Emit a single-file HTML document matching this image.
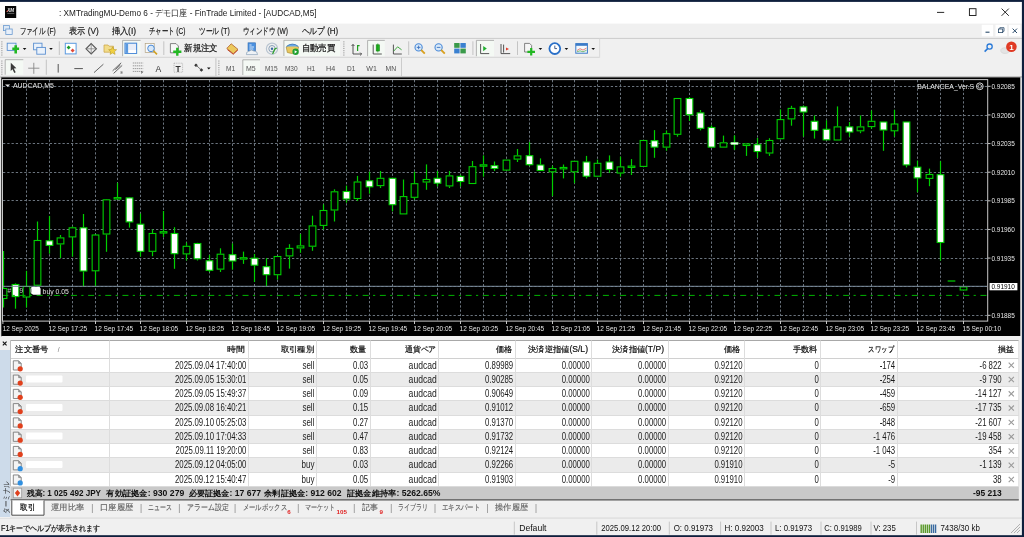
<!DOCTYPE html>
<html><head><meta charset="utf-8">
<style>
*{margin:0;padding:0}
html,body{width:1024px;height:537px;overflow:hidden;background:#f0f0f0;font-family:"Liberation Sans",sans-serif}
svg{position:absolute;left:0;top:0;will-change:transform}
</style></head><body>
<svg width="1024" height="537" viewBox="0 0 1024 537" font-family="Liberation Sans">
<rect x="0" y="0" width="1024" height="537" fill="#f0f0f0"/>
<rect x="0" y="0" width="1024" height="23.6" fill="#ffffff"/>
<rect x="0" y="76.4" width="1022" height="1.1" fill="#a8a8a8"/>
<rect x="0.9" y="77.3" width="1.1" height="259" fill="#707070"/>
<rect x="1.6" y="77.4" width="1018.7" height="258.6" fill="#000"/>
<defs><clipPath id="pc"><rect x="3" y="80" width="984" height="241"/></clipPath></defs>
<g clip-path="url(#pc)"><g stroke="#6a737d" stroke-width="1" stroke-dasharray="2.3 1.95" fill="none"><line x1="26.50" y1="80" x2="26.50" y2="321" /><line x1="49.50" y1="80" x2="49.50" y2="321" /><line x1="72.50" y1="80" x2="72.50" y2="321" /><line x1="95.50" y1="80" x2="95.50" y2="321" /><line x1="117.50" y1="80" x2="117.50" y2="321" /><line x1="140.50" y1="80" x2="140.50" y2="321" /><line x1="163.50" y1="80" x2="163.50" y2="321" /><line x1="186.50" y1="80" x2="186.50" y2="321" /><line x1="209.50" y1="80" x2="209.50" y2="321" /><line x1="232.50" y1="80" x2="232.50" y2="321" /><line x1="254.50" y1="80" x2="254.50" y2="321" /><line x1="277.50" y1="80" x2="277.50" y2="321" /><line x1="300.50" y1="80" x2="300.50" y2="321" /><line x1="323.50" y1="80" x2="323.50" y2="321" /><line x1="346.50" y1="80" x2="346.50" y2="321" /><line x1="369.50" y1="80" x2="369.50" y2="321" /><line x1="392.50" y1="80" x2="392.50" y2="321" /><line x1="414.50" y1="80" x2="414.50" y2="321" /><line x1="437.50" y1="80" x2="437.50" y2="321" /><line x1="460.50" y1="80" x2="460.50" y2="321" /><line x1="483.50" y1="80" x2="483.50" y2="321" /><line x1="506.50" y1="80" x2="506.50" y2="321" /><line x1="529.50" y1="80" x2="529.50" y2="321" /><line x1="552.50" y1="80" x2="552.50" y2="321" /><line x1="574.50" y1="80" x2="574.50" y2="321" /><line x1="597.50" y1="80" x2="597.50" y2="321" /><line x1="620.50" y1="80" x2="620.50" y2="321" /><line x1="643.50" y1="80" x2="643.50" y2="321" /><line x1="666.50" y1="80" x2="666.50" y2="321" /><line x1="689.50" y1="80" x2="689.50" y2="321" /><line x1="711.50" y1="80" x2="711.50" y2="321" /><line x1="734.50" y1="80" x2="734.50" y2="321" /><line x1="757.50" y1="80" x2="757.50" y2="321" /><line x1="780.50" y1="80" x2="780.50" y2="321" /><line x1="803.50" y1="80" x2="803.50" y2="321" /><line x1="826.50" y1="80" x2="826.50" y2="321" /><line x1="849.50" y1="80" x2="849.50" y2="321" /><line x1="871.50" y1="80" x2="871.50" y2="321" /><line x1="894.50" y1="80" x2="894.50" y2="321" /><line x1="917.50" y1="80" x2="917.50" y2="321" /><line x1="940.50" y1="80" x2="940.50" y2="321" /><line x1="963.50" y1="80" x2="963.50" y2="321" /><line x1="3" y1="86.50" x2="987" y2="86.50" /><line x1="3" y1="115.50" x2="987" y2="115.50" /><line x1="3" y1="143.50" x2="987" y2="143.50" /><line x1="3" y1="172.50" x2="987" y2="172.50" /><line x1="3" y1="200.50" x2="987" y2="200.50" /><line x1="3" y1="229.50" x2="987" y2="229.50" /><line x1="3" y1="258.50" x2="987" y2="258.50" /><line x1="3" y1="286.50" x2="987" y2="286.50" /><line x1="3" y1="315.50" x2="987" y2="315.50" /></g><g stroke="#00d000" stroke-width="1.2" fill="none"><line x1="3.50" y1="251.0" x2="3.50" y2="288.0" /><line x1="3.50" y1="299.0" x2="3.50" y2="307.4" /><line x1="15.50" y1="283.4" x2="15.50" y2="284.0" /><line x1="15.50" y1="297.1" x2="15.50" y2="308.7" /><line x1="26.50" y1="270.8" x2="26.50" y2="286.0" /><line x1="26.50" y1="297.5" x2="26.50" y2="307.4" /><line x1="37.50" y1="221.5" x2="37.50" y2="240.0" /><line x1="37.50" y1="285.7" x2="37.50" y2="290.0" /><line x1="49.50" y1="215.9" x2="49.50" y2="240.3" /><line x1="49.50" y1="245.9" x2="49.50" y2="253.7" /><line x1="60.50" y1="235.0" x2="60.50" y2="237.4" /><line x1="60.50" y1="244.4" x2="60.50" y2="258.0" /><line x1="72.50" y1="226.4" x2="72.50" y2="227.3" /><line x1="72.50" y1="237.4" x2="72.50" y2="256.6" /><line x1="83.50" y1="214.0" x2="83.50" y2="227.3" /><line x1="83.50" y1="271.5" x2="83.50" y2="286.7" /><line x1="95.50" y1="234.0" x2="95.50" y2="234.5" /><line x1="95.50" y1="271.3" x2="95.50" y2="286.7" /><line x1="106.50" y1="199.0" x2="106.50" y2="199.3" /><line x1="106.50" y1="234.5" x2="106.50" y2="251.8" /><line x1="117.50" y1="182.8" x2="117.50" y2="197.6" /><line x1="129.50" y1="197.0" x2="129.50" y2="197.4" /><line x1="129.50" y1="222.4" x2="129.50" y2="227.6" /><line x1="140.50" y1="213.6" x2="140.50" y2="223.7" /><line x1="140.50" y1="251.8" x2="140.50" y2="256.6" /><line x1="152.50" y1="229.4" x2="152.50" y2="233.0" /><line x1="152.50" y1="251.8" x2="152.50" y2="256.2" /><line x1="163.50" y1="211.0" x2="163.50" y2="231.3" /><line x1="163.50" y1="233.4" x2="163.50" y2="237.0" /><line x1="174.50" y1="227.2" x2="174.50" y2="233.0" /><line x1="174.50" y1="254.2" x2="174.50" y2="268.8" /><line x1="186.50" y1="242.5" x2="186.50" y2="245.8" /><line x1="186.50" y1="254.4" x2="186.50" y2="260.5" /><line x1="197.50" y1="242.8" x2="197.50" y2="243.0" /><line x1="197.50" y1="259.3" x2="197.50" y2="260.5" /><line x1="209.50" y1="255.0" x2="209.50" y2="260.3" /><line x1="209.50" y1="270.8" x2="209.50" y2="272.0" /><line x1="220.50" y1="248.3" x2="220.50" y2="253.7" /><line x1="220.50" y1="269.6" x2="220.50" y2="272.0" /><line x1="232.50" y1="243.5" x2="232.50" y2="254.2" /><line x1="232.50" y1="261.5" x2="232.50" y2="269.6" /><line x1="243.50" y1="251.6" x2="243.50" y2="257.3" /><line x1="243.50" y1="259.5" x2="243.50" y2="263.9" /><line x1="254.50" y1="254.0" x2="254.50" y2="257.7" /><line x1="254.50" y1="265.7" x2="254.50" y2="282.0" /><line x1="266.50" y1="258.1" x2="266.50" y2="266.2" /><line x1="266.50" y1="275.2" x2="266.50" y2="286.5" /><line x1="277.50" y1="275.2" x2="277.50" y2="279.6" /><line x1="289.50" y1="244.2" x2="289.50" y2="247.9" /><line x1="289.50" y1="256.4" x2="289.50" y2="268.6" /><line x1="300.50" y1="234.0" x2="300.50" y2="245.4" /><line x1="300.50" y1="248.4" x2="300.50" y2="252.8" /><line x1="312.50" y1="215.7" x2="312.50" y2="225.4" /><line x1="312.50" y1="246.7" x2="312.50" y2="250.8" /><line x1="323.50" y1="204.4" x2="323.50" y2="210.0" /><line x1="323.50" y1="225.9" x2="323.50" y2="229.6" /><line x1="334.50" y1="189.3" x2="334.50" y2="191.3" /><line x1="334.50" y1="210.5" x2="334.50" y2="221.5" /><line x1="346.50" y1="185.6" x2="346.50" y2="191.0" /><line x1="346.50" y1="199.5" x2="346.50" y2="202.7" /><line x1="357.50" y1="175.9" x2="357.50" y2="181.5" /><line x1="357.50" y1="199.0" x2="357.50" y2="201.0" /><line x1="369.50" y1="171.7" x2="369.50" y2="180.3" /><line x1="369.50" y1="187.3" x2="369.50" y2="193.7" /><line x1="380.50" y1="171.0" x2="380.50" y2="177.8" /><line x1="380.50" y1="186.1" x2="380.50" y2="188.0" /><line x1="392.50" y1="205.2" x2="392.50" y2="211.3" /><line x1="403.50" y1="179.5" x2="403.50" y2="196.1" /><line x1="414.50" y1="171.7" x2="414.50" y2="183.2" /><line x1="414.50" y1="197.8" x2="414.50" y2="199.5" /><line x1="426.50" y1="164.4" x2="426.50" y2="179.0" /><line x1="426.50" y1="182.5" x2="426.50" y2="189.8" /><line x1="437.50" y1="171.0" x2="437.50" y2="177.8" /><line x1="437.50" y1="183.7" x2="437.50" y2="186.4" /><line x1="449.50" y1="171.0" x2="449.50" y2="175.4" /><line x1="449.50" y1="186.4" x2="449.50" y2="188.0" /><line x1="460.50" y1="174.6" x2="460.50" y2="175.9" /><line x1="460.50" y1="182.0" x2="460.50" y2="186.4" /><line x1="472.50" y1="161.0" x2="472.50" y2="166.2" /><line x1="483.50" y1="155.4" x2="483.50" y2="164.5" /><line x1="483.50" y1="166.5" x2="483.50" y2="176.7" /><line x1="494.50" y1="161.5" x2="494.50" y2="165.2" /><line x1="494.50" y1="168.9" x2="494.50" y2="171.0" /><line x1="517.50" y1="149.0" x2="517.50" y2="155.4" /><line x1="517.50" y1="159.6" x2="517.50" y2="162.0" /><line x1="529.50" y1="142.0" x2="529.50" y2="155.2" /><line x1="529.50" y1="165.2" x2="529.50" y2="166.2" /><line x1="540.50" y1="158.4" x2="540.50" y2="164.5" /><line x1="552.50" y1="165.7" x2="552.50" y2="168.1" /><line x1="552.50" y1="172.3" x2="552.50" y2="196.2" /><line x1="563.50" y1="164.5" x2="563.50" y2="167.4" /><line x1="563.50" y1="168.9" x2="563.50" y2="178.4" /><line x1="574.50" y1="172.3" x2="574.50" y2="183.3" /><line x1="586.50" y1="155.9" x2="586.50" y2="161.5" /><line x1="586.50" y1="176.7" x2="586.50" y2="178.4" /><line x1="597.50" y1="159.6" x2="597.50" y2="162.8" /><line x1="609.50" y1="155.4" x2="609.50" y2="161.5" /><line x1="609.50" y1="170.0" x2="609.50" y2="173.0" /><line x1="620.50" y1="156.6" x2="620.50" y2="166.4" /><line x1="620.50" y1="173.5" x2="620.50" y2="176.7" /><line x1="631.50" y1="159.1" x2="631.50" y2="166.4" /><line x1="631.50" y1="167.1" x2="631.50" y2="175.0" /><line x1="654.50" y1="130.1" x2="654.50" y2="140.2" /><line x1="654.50" y1="147.6" x2="654.50" y2="157.8" /><line x1="666.50" y1="130.4" x2="666.50" y2="133.2" /><line x1="666.50" y1="147.6" x2="666.50" y2="150.7" /><line x1="677.50" y1="134.8" x2="677.50" y2="136.7" /><line x1="689.50" y1="97.2" x2="689.50" y2="98.0" /><line x1="689.50" y1="115.2" x2="689.50" y2="121.0" /><line x1="700.50" y1="110.0" x2="700.50" y2="112.4" /><line x1="700.50" y1="128.8" x2="700.50" y2="130.4" /><line x1="711.50" y1="125.4" x2="711.50" y2="127.0" /><line x1="711.50" y1="147.6" x2="711.50" y2="148.0" /><line x1="723.50" y1="135.6" x2="723.50" y2="142.3" /><line x1="734.50" y1="135.6" x2="734.50" y2="142.3" /><line x1="734.50" y1="144.6" x2="734.50" y2="149.6" /><line x1="734.50" y1="135.6" x2="734.50" y2="142.3" /><line x1="734.50" y1="144.6" x2="734.50" y2="149.6" /><line x1="746.50" y1="146.0" x2="746.50" y2="155.9" /><line x1="757.50" y1="137.9" x2="757.50" y2="144.2" /><line x1="757.50" y1="152.0" x2="757.50" y2="157.8" /><line x1="769.50" y1="138.2" x2="769.50" y2="140.0" /><line x1="769.50" y1="153.5" x2="769.50" y2="155.9" /><line x1="780.50" y1="109.4" x2="780.50" y2="119.1" /><line x1="791.50" y1="105.8" x2="791.50" y2="107.9" /><line x1="791.50" y1="119.4" x2="791.50" y2="125.7" /><line x1="803.50" y1="105.6" x2="803.50" y2="106.4" /><line x1="803.50" y1="112.5" x2="803.50" y2="136.6" /><line x1="814.50" y1="115.4" x2="814.50" y2="120.8" /><line x1="814.50" y1="130.8" x2="814.50" y2="138.6" /><line x1="826.50" y1="120.3" x2="826.50" y2="128.8" /><line x1="837.50" y1="106.4" x2="837.50" y2="126.4" /><line x1="849.50" y1="122.0" x2="849.50" y2="126.4" /><line x1="849.50" y1="132.5" x2="849.50" y2="136.6" /><line x1="860.50" y1="115.4" x2="860.50" y2="126.4" /><line x1="860.50" y1="131.3" x2="860.50" y2="133.2" /><line x1="871.50" y1="110.5" x2="871.50" y2="120.8" /><line x1="871.50" y1="127.1" x2="871.50" y2="128.8" /><line x1="883.50" y1="130.5" x2="883.50" y2="150.8" /><line x1="894.50" y1="109.8" x2="894.50" y2="123.5" /><line x1="894.50" y1="131.3" x2="894.50" y2="136.6" /><line x1="906.50" y1="165.4" x2="906.50" y2="167.4" /><line x1="917.50" y1="160.6" x2="917.50" y2="166.7" /><line x1="917.50" y1="178.4" x2="917.50" y2="192.3" /><line x1="929.50" y1="168.6" x2="929.50" y2="174.0" /><line x1="929.50" y1="178.9" x2="929.50" y2="186.2" /><line x1="940.50" y1="161.2" x2="940.50" y2="174.2" /><line x1="940.50" y1="243.0" x2="940.50" y2="260.6" /><line x1="947.65" y1="281.0" x2="955.35" y2="281.0" /></g><g stroke="#00d000" stroke-width="1.1"><rect x="0.15" y="288.50" width="6.70" height="10.00" fill="#000000" /><rect x="12.15" y="284.50" width="6.70" height="12.10" fill="#ffffff" /><rect x="23.15" y="286.50" width="6.70" height="10.50" fill="#000000" /><rect x="34.15" y="240.50" width="6.70" height="44.70" fill="#000000" /><rect x="46.15" y="240.80" width="6.70" height="4.60" fill="#ffffff" /><rect x="57.15" y="237.90" width="6.70" height="6.00" fill="#000000" /><rect x="69.15" y="227.80" width="6.70" height="9.10" fill="#000000" /><rect x="80.15" y="227.80" width="6.70" height="43.20" fill="#ffffff" /><rect x="92.15" y="235.00" width="6.70" height="35.80" fill="#000000" /><rect x="103.15" y="199.80" width="6.70" height="34.20" fill="#000000" /><rect x="114.15" y="197.60" width="6.70" height="1.40" fill="#000000" /><rect x="126.15" y="197.90" width="6.70" height="24.00" fill="#ffffff" /><rect x="137.15" y="224.20" width="6.70" height="27.10" fill="#ffffff" /><rect x="149.15" y="233.50" width="6.70" height="17.80" fill="#000000" /><rect x="160.15" y="231.65" width="6.70" height="1.40" fill="#000000" /><rect x="171.15" y="233.50" width="6.70" height="20.20" fill="#ffffff" /><rect x="183.15" y="246.30" width="6.70" height="7.60" fill="#000000" /><rect x="194.15" y="243.50" width="6.70" height="15.30" fill="#ffffff" /><rect x="206.15" y="260.80" width="6.70" height="9.50" fill="#ffffff" /><rect x="217.15" y="254.20" width="6.70" height="14.90" fill="#000000" /><rect x="229.15" y="254.70" width="6.70" height="6.30" fill="#ffffff" /><rect x="240.15" y="257.70" width="6.70" height="1.40" fill="#000000" /><rect x="251.15" y="258.20" width="6.70" height="7.00" fill="#ffffff" /><rect x="263.15" y="266.70" width="6.70" height="8.00" fill="#ffffff" /><rect x="274.15" y="256.50" width="6.70" height="18.20" fill="#000000" /><rect x="286.15" y="248.40" width="6.70" height="7.50" fill="#000000" /><rect x="297.15" y="245.90" width="6.70" height="2.00" fill="#000000" /><rect x="309.15" y="225.90" width="6.70" height="20.30" fill="#000000" /><rect x="320.15" y="210.50" width="6.70" height="14.90" fill="#000000" /><rect x="331.15" y="191.80" width="6.70" height="18.20" fill="#000000" /><rect x="343.15" y="191.50" width="6.70" height="7.50" fill="#ffffff" /><rect x="354.15" y="182.00" width="6.70" height="16.50" fill="#000000" /><rect x="366.15" y="180.80" width="6.70" height="6.00" fill="#ffffff" /><rect x="377.15" y="178.30" width="6.70" height="7.30" fill="#000000" /><rect x="389.15" y="178.30" width="6.70" height="26.40" fill="#ffffff" /><rect x="400.15" y="196.60" width="6.70" height="17.30" fill="#000000" /><rect x="411.15" y="183.70" width="6.70" height="13.60" fill="#000000" /><rect x="423.15" y="179.50" width="6.70" height="2.50" fill="#000000" /><rect x="434.15" y="178.30" width="6.70" height="4.90" fill="#ffffff" /><rect x="446.15" y="175.90" width="6.70" height="10.00" fill="#000000" /><rect x="457.15" y="176.40" width="6.70" height="5.10" fill="#ffffff" /><rect x="469.15" y="166.70" width="6.70" height="16.80" fill="#000000" /><rect x="480.15" y="164.80" width="6.70" height="1.40" fill="#000000" /><rect x="491.15" y="165.70" width="6.70" height="2.70" fill="#ffffff" /><rect x="503.15" y="160.10" width="6.70" height="10.00" fill="#000000" /><rect x="514.15" y="155.90" width="6.70" height="3.20" fill="#000000" /><rect x="526.15" y="155.70" width="6.70" height="9.00" fill="#ffffff" /><rect x="537.15" y="165.00" width="6.70" height="5.50" fill="#ffffff" /><rect x="549.15" y="168.60" width="6.70" height="3.20" fill="#000000" /><rect x="560.15" y="167.45" width="6.70" height="1.40" fill="#000000" /><rect x="571.15" y="161.30" width="6.70" height="10.50" fill="#000000" /><rect x="583.15" y="162.00" width="6.70" height="14.20" fill="#ffffff" /><rect x="594.15" y="163.30" width="6.70" height="12.90" fill="#000000" /><rect x="606.15" y="162.00" width="6.70" height="7.50" fill="#ffffff" /><rect x="617.15" y="166.90" width="6.70" height="6.10" fill="#000000" /><rect x="628.15" y="166.05" width="6.70" height="1.40" fill="#000000" /><rect x="640.15" y="140.50" width="6.70" height="25.90" fill="#000000" /><rect x="651.15" y="140.70" width="6.70" height="6.40" fill="#ffffff" /><rect x="663.15" y="133.70" width="6.70" height="13.40" fill="#000000" /><rect x="674.15" y="98.50" width="6.70" height="35.80" fill="#000000" /><rect x="686.15" y="98.50" width="6.70" height="16.20" fill="#ffffff" /><rect x="697.15" y="112.90" width="6.70" height="15.40" fill="#ffffff" /><rect x="708.15" y="127.50" width="6.70" height="19.60" fill="#ffffff" /><rect x="720.15" y="142.80" width="6.70" height="4.30" fill="#000000" /><rect x="730.95" y="142.30" width="7.10" height="2.30" fill="#ffffff" stroke="#60ff60" stroke-width="0.5"/><rect x="743.15" y="143.90" width="6.70" height="1.60" fill="#000000" /><rect x="754.15" y="144.70" width="6.70" height="6.80" fill="#ffffff" /><rect x="766.15" y="140.50" width="6.70" height="12.50" fill="#000000" /><rect x="777.15" y="119.60" width="6.70" height="19.10" fill="#000000" /><rect x="788.15" y="108.40" width="6.70" height="10.50" fill="#000000" /><rect x="800.15" y="106.90" width="6.70" height="5.10" fill="#ffffff" /><rect x="811.15" y="121.30" width="6.70" height="9.00" fill="#ffffff" /><rect x="823.15" y="129.30" width="6.70" height="10.50" fill="#ffffff" /><rect x="834.15" y="126.90" width="6.70" height="13.10" fill="#000000" /><rect x="846.15" y="126.90" width="6.70" height="5.10" fill="#ffffff" /><rect x="857.15" y="126.90" width="6.70" height="3.90" fill="#000000" /><rect x="868.15" y="121.30" width="6.70" height="5.30" fill="#000000" /><rect x="880.15" y="122.00" width="6.70" height="8.00" fill="#ffffff" /><rect x="891.15" y="124.00" width="6.70" height="6.80" fill="#000000" /><rect x="903.15" y="122.00" width="6.70" height="42.90" fill="#ffffff" /><rect x="914.15" y="167.20" width="6.70" height="10.70" fill="#ffffff" /><rect x="926.15" y="174.50" width="6.70" height="3.90" fill="#000000" /><rect x="937.15" y="174.70" width="6.70" height="67.80" fill="#ffffff" /><rect x="960.15" y="286.90" width="6.70" height="3.10" fill="#000000" /></g><line x1="3" y1="286.3" x2="987" y2="286.3" stroke="#7a8a9a" stroke-width="1"/><line x1="3" y1="295.4" x2="987" y2="295.4" stroke="#00b400" stroke-width="1" stroke-dasharray="6 4.35 2.2 4.61" stroke-dashoffset="0.68"/></g>
<rect x="2.5" y="79.6" width="985.2" height="241.5" fill="none" stroke="#c8c8c8" stroke-width="1"/>
<g fill="#e6e6e6" font-family="Liberation Sans" font-size="7.3"><text x="2.8" y="331.1" textLength="35.9" lengthAdjust="spacingAndGlyphs">12 Sep 2025</text><text x="48.60" y="331.1" textLength="38.6" lengthAdjust="spacingAndGlyphs">12 Sep 17:25</text><text x="94.60" y="331.1" textLength="38.6" lengthAdjust="spacingAndGlyphs">12 Sep 17:45</text><text x="139.60" y="331.1" textLength="38.6" lengthAdjust="spacingAndGlyphs">12 Sep 18:05</text><text x="185.60" y="331.1" textLength="38.6" lengthAdjust="spacingAndGlyphs">12 Sep 18:25</text><text x="231.60" y="331.1" textLength="38.6" lengthAdjust="spacingAndGlyphs">12 Sep 18:45</text><text x="276.60" y="331.1" textLength="38.6" lengthAdjust="spacingAndGlyphs">12 Sep 19:05</text><text x="322.60" y="331.1" textLength="38.6" lengthAdjust="spacingAndGlyphs">12 Sep 19:25</text><text x="368.60" y="331.1" textLength="38.6" lengthAdjust="spacingAndGlyphs">12 Sep 19:45</text><text x="413.60" y="331.1" textLength="38.6" lengthAdjust="spacingAndGlyphs">12 Sep 20:05</text><text x="459.60" y="331.1" textLength="38.6" lengthAdjust="spacingAndGlyphs">12 Sep 20:25</text><text x="505.60" y="331.1" textLength="38.6" lengthAdjust="spacingAndGlyphs">12 Sep 20:45</text><text x="551.60" y="331.1" textLength="38.6" lengthAdjust="spacingAndGlyphs">12 Sep 21:05</text><text x="596.60" y="331.1" textLength="38.6" lengthAdjust="spacingAndGlyphs">12 Sep 21:25</text><text x="642.60" y="331.1" textLength="38.6" lengthAdjust="spacingAndGlyphs">12 Sep 21:45</text><text x="688.60" y="331.1" textLength="38.6" lengthAdjust="spacingAndGlyphs">12 Sep 22:05</text><text x="733.60" y="331.1" textLength="38.6" lengthAdjust="spacingAndGlyphs">12 Sep 22:25</text><text x="779.60" y="331.1" textLength="38.6" lengthAdjust="spacingAndGlyphs">12 Sep 22:45</text><text x="825.60" y="331.1" textLength="38.6" lengthAdjust="spacingAndGlyphs">12 Sep 23:05</text><text x="870.60" y="331.1" textLength="38.6" lengthAdjust="spacingAndGlyphs">12 Sep 23:25</text><text x="916.60" y="331.1" textLength="38.6" lengthAdjust="spacingAndGlyphs">12 Sep 23:45</text><text x="962.60" y="331.1" textLength="38.4" lengthAdjust="spacingAndGlyphs">15 Sep 00:10</text><text x="991.4" y="88.90" textLength="23.4" lengthAdjust="spacingAndGlyphs">0.92085</text><text x="991.4" y="117.53" textLength="23.4" lengthAdjust="spacingAndGlyphs">0.92060</text><text x="991.4" y="146.16" textLength="23.4" lengthAdjust="spacingAndGlyphs">0.92035</text><text x="991.4" y="174.79" textLength="23.4" lengthAdjust="spacingAndGlyphs">0.92010</text><text x="991.4" y="203.42" textLength="23.4" lengthAdjust="spacingAndGlyphs">0.91985</text><text x="991.4" y="232.05" textLength="23.4" lengthAdjust="spacingAndGlyphs">0.91960</text><text x="991.4" y="260.68" textLength="23.4" lengthAdjust="spacingAndGlyphs">0.91935</text><text x="991.4" y="317.94" textLength="23.4" lengthAdjust="spacingAndGlyphs">0.91885</text></g><g stroke="#c8c8c8" stroke-width="1"><line x1="2.9" y1="321" x2="2.9" y2="324"/><line x1="49.50" y1="321" x2="49.50" y2="324"/><line x1="95.50" y1="321" x2="95.50" y2="324"/><line x1="140.50" y1="321" x2="140.50" y2="324"/><line x1="186.50" y1="321" x2="186.50" y2="324"/><line x1="232.50" y1="321" x2="232.50" y2="324"/><line x1="277.50" y1="321" x2="277.50" y2="324"/><line x1="323.50" y1="321" x2="323.50" y2="324"/><line x1="369.50" y1="321" x2="369.50" y2="324"/><line x1="414.50" y1="321" x2="414.50" y2="324"/><line x1="460.50" y1="321" x2="460.50" y2="324"/><line x1="506.50" y1="321" x2="506.50" y2="324"/><line x1="552.50" y1="321" x2="552.50" y2="324"/><line x1="597.50" y1="321" x2="597.50" y2="324"/><line x1="643.50" y1="321" x2="643.50" y2="324"/><line x1="689.50" y1="321" x2="689.50" y2="324"/><line x1="734.50" y1="321" x2="734.50" y2="324"/><line x1="780.50" y1="321" x2="780.50" y2="324"/><line x1="826.50" y1="321" x2="826.50" y2="324"/><line x1="871.50" y1="321" x2="871.50" y2="324"/><line x1="917.50" y1="321" x2="917.50" y2="324"/><line x1="963.50" y1="321" x2="963.50" y2="324"/><line x1="988" y1="86.30" x2="990.5" y2="86.30"/><line x1="988" y1="114.93" x2="990.5" y2="114.93"/><line x1="988" y1="143.56" x2="990.5" y2="143.56"/><line x1="988" y1="172.19" x2="990.5" y2="172.19"/><line x1="988" y1="200.82" x2="990.5" y2="200.82"/><line x1="988" y1="229.45" x2="990.5" y2="229.45"/><line x1="988" y1="258.08" x2="990.5" y2="258.08"/><line x1="988" y1="315.34" x2="990.5" y2="315.34"/></g>
<polygon points="5,84.4 10.2,84.4 7.6,86.8" fill="#f0f0f0"/>
<text x="12.9" y="88" fill="#e6e6e6" font-size="7.3" textLength="41" lengthAdjust="spacingAndGlyphs">AUDCAD,M5</text>
<text x="917.3" y="88.6" fill="#e6e6e6" font-size="7.3" textLength="56.8" lengthAdjust="spacingAndGlyphs">BALANCEA_Ver.S</text>
<circle cx="979.8" cy="86.3" r="3.4" fill="none" stroke="#e6e6e6" stroke-width="0.9"/>
<circle cx="979.8" cy="86.3" r="1.8" fill="none" stroke="#e6e6e6" stroke-width="0.7"/>
<rect x="989.6" y="283" width="27.8" height="7.3" fill="#fff"/>
<text x="991.4" y="289.2" fill="#000" font-size="7.3" textLength="23.4" lengthAdjust="spacingAndGlyphs">0.91910</text>
<text x="42.6" y="293.6" fill="#e0e0e0" font-size="7.3" textLength="26.2" lengthAdjust="spacingAndGlyphs">buy 0.05</text>
<text x="7.4" y="293.4" fill="#bdbdbd" font-size="6.6">#</text>
<text x="19.4" y="293.4" fill="#bdbdbd" font-size="6.6">9</text>
<text x="29.8" y="293.4" fill="#bdbdbd" font-size="6.6">0</text>
<path d="M31.3,287 h8.4 l0.9,1.8 v6 h-7.2 l-2.1,-1 z" fill="#fff"/>
<rect x="0" y="517.6" width="1022" height="0.9" fill="#d4d4d4"/>
<rect x="10.4" y="340.5" width="1008.4" height="17.5" fill="#fff"/><rect x="10.4" y="358.00" width="1008.40" height="14.27" fill="#ffffff"/><rect x="10.4" y="372.27" width="1008.40" height="14.27" fill="#ebebeb"/><rect x="10.4" y="386.54" width="1008.40" height="14.27" fill="#ffffff"/><rect x="10.4" y="400.81" width="1008.40" height="14.27" fill="#ebebeb"/><rect x="10.4" y="415.08" width="1008.40" height="14.27" fill="#ffffff"/><rect x="10.4" y="429.35" width="1008.40" height="14.27" fill="#ebebeb"/><rect x="10.4" y="443.62" width="1008.40" height="14.27" fill="#ffffff"/><rect x="10.4" y="457.89" width="1008.40" height="14.27" fill="#ebebeb"/><rect x="10.4" y="472.16" width="1008.40" height="14.27" fill="#ffffff"/><g stroke-width="1"><line x1="10.4" y1="340.5" x2="1018.8" y2="340.5" stroke="#a8a8a8"/><line x1="10.4" y1="358.5" x2="1018.8" y2="358.5" stroke="#d0d0d0"/><line x1="10.4" y1="372.50" x2="1018.8" y2="372.50" stroke="#dcdcdc"/><line x1="10.4" y1="386.50" x2="1018.8" y2="386.50" stroke="#dcdcdc"/><line x1="10.4" y1="400.50" x2="1018.8" y2="400.50" stroke="#dcdcdc"/><line x1="10.4" y1="415.50" x2="1018.8" y2="415.50" stroke="#dcdcdc"/><line x1="10.4" y1="429.50" x2="1018.8" y2="429.50" stroke="#dcdcdc"/><line x1="10.4" y1="443.50" x2="1018.8" y2="443.50" stroke="#dcdcdc"/><line x1="10.4" y1="457.50" x2="1018.8" y2="457.50" stroke="#dcdcdc"/><line x1="10.4" y1="472.50" x2="1018.8" y2="472.50" stroke="#dcdcdc"/><line x1="109.5" y1="340.5" x2="109.5" y2="486.4" stroke="#dddddd"/><line x1="248.5" y1="340.5" x2="248.5" y2="486.4" stroke="#dddddd"/><line x1="316.5" y1="340.5" x2="316.5" y2="486.4" stroke="#dddddd"/><line x1="370.5" y1="340.5" x2="370.5" y2="486.4" stroke="#dddddd"/><line x1="438.5" y1="340.5" x2="438.5" y2="486.4" stroke="#dddddd"/><line x1="515.5" y1="340.5" x2="515.5" y2="486.4" stroke="#dddddd"/><line x1="591.5" y1="340.5" x2="591.5" y2="486.4" stroke="#dddddd"/><line x1="668.5" y1="340.5" x2="668.5" y2="486.4" stroke="#dddddd"/><line x1="744.5" y1="340.5" x2="744.5" y2="486.4" stroke="#dddddd"/><line x1="820.5" y1="340.5" x2="820.5" y2="486.4" stroke="#dddddd"/><line x1="897.5" y1="340.5" x2="897.5" y2="486.4" stroke="#dddddd"/><line x1="10.4" y1="340.5" x2="10.4" y2="486.4" stroke="#a8a8a8"/><line x1="1018.8" y1="340.5" x2="1018.8" y2="486.4" stroke="#dcdcdc"/></g><text x="15.30" y="352.30" font-size="8.3" fill="#111" text-anchor="start" textLength="33.1" lengthAdjust="spacingAndGlyphs" stroke="#111" stroke-width="0.2">注文番号</text><text x="57.80" y="351.80" font-size="6.5" fill="#777" text-anchor="start">/</text><text x="227.20" y="352.30" font-size="8.3" fill="#111" text-anchor="start" textLength="17.8" lengthAdjust="spacingAndGlyphs" stroke="#111" stroke-width="0.2">時間</text><text x="280.50" y="352.30" font-size="8.3" fill="#111" text-anchor="start" textLength="33.9" lengthAdjust="spacingAndGlyphs" stroke="#111" stroke-width="0.2">取引種別</text><text x="350.20" y="352.30" font-size="8.3" fill="#111" text-anchor="start" textLength="16.1" lengthAdjust="spacingAndGlyphs" stroke="#111" stroke-width="0.2">数量</text><text x="404.90" y="352.30" font-size="8.3" fill="#111" text-anchor="start" textLength="31.4" lengthAdjust="spacingAndGlyphs" stroke="#111" stroke-width="0.2">通貨ペア</text><text x="495.70" y="352.30" font-size="8.3" fill="#111" text-anchor="start" textLength="16.3" lengthAdjust="spacingAndGlyphs" stroke="#111" stroke-width="0.2">価格</text><text x="528.20" y="352.30" font-size="8.3" fill="#111" text-anchor="start" textLength="59.8" lengthAdjust="spacingAndGlyphs" stroke="#111" stroke-width="0.2">決済逆指値(S/L)</text><text x="612.10" y="352.30" font-size="8.3" fill="#111" text-anchor="start" textLength="51.9" lengthAdjust="spacingAndGlyphs" stroke="#111" stroke-width="0.2">決済指値(T/P)</text><text x="724.20" y="352.30" font-size="8.3" fill="#111" text-anchor="start" textLength="16.4" lengthAdjust="spacingAndGlyphs" stroke="#111" stroke-width="0.2">価格</text><text x="792.70" y="352.30" font-size="8.3" fill="#111" text-anchor="start" textLength="24.6" lengthAdjust="spacingAndGlyphs" stroke="#111" stroke-width="0.2">手数料</text><text x="868.40" y="352.30" font-size="8.3" fill="#111" text-anchor="start" textLength="25.5" lengthAdjust="spacingAndGlyphs" stroke="#111" stroke-width="0.2">スワップ</text><text x="998.30" y="352.30" font-size="8.3" fill="#111" text-anchor="start" textLength="15.9" lengthAdjust="spacingAndGlyphs" stroke="#111" stroke-width="0.2">損益</text><text transform="translate(246.40,368.60) scale(0.7783,1)" font-size="10" fill="#1a1a1a" text-anchor="end">2025.09.04 17:40:00</text><text transform="translate(314.40,368.60) scale(0.7998,1)" font-size="10" fill="#1a1a1a" text-anchor="end">sell</text><text transform="translate(368.20,368.60) scale(0.7783,1)" font-size="10" fill="#1a1a1a" text-anchor="end">0.03</text><text transform="translate(436.80,368.60) scale(0.86,1)" font-size="10" fill="#1a1a1a" text-anchor="end">audcad</text><text transform="translate(513.20,368.60) scale(0.7783,1)" font-size="10" fill="#1a1a1a" text-anchor="end">0.89989</text><text transform="translate(589.80,368.60) scale(0.7783,1)" font-size="10" fill="#1a1a1a" text-anchor="end">0.00000</text><text transform="translate(666.20,368.60) scale(0.7783,1)" font-size="10" fill="#1a1a1a" text-anchor="end">0.00000</text><text transform="translate(742.50,368.60) scale(0.7783,1)" font-size="10" fill="#1a1a1a" text-anchor="end">0.92120</text><text transform="translate(818.80,368.60) scale(0.7783,1)" font-size="10" fill="#1a1a1a" text-anchor="end">0</text><text transform="translate(895.20,368.60) scale(0.7783,1)" font-size="10" fill="#1a1a1a" text-anchor="end">-174</text><text transform="translate(1001.60,368.60) scale(0.7783,1)" font-size="10" fill="#1a1a1a" text-anchor="end">-6 822</text><path d="M1008.6999999999999,362.7 L1013.9,367.90000000000003 M1013.9,362.7 L1008.6999999999999,367.90000000000003" stroke="#9a9a9a" stroke-width="1.1"/><path d="M13.3,360.79999999999995 h5.3 l2.6,2.6 v6.6 h-7.9 z" fill="#f4f4f4" stroke="#7a7a7a" stroke-width="0.9"/><path d="M18.6,360.79999999999995 v2.6 h2.6" fill="#9a9a9a" stroke="#7a7a7a" stroke-width="0.6"/><circle cx="20.200000000000003" cy="368.79999999999995" r="2.6" fill="#e0401c"/><text transform="translate(246.40,382.87) scale(0.7783,1)" font-size="10" fill="#1a1a1a" text-anchor="end">2025.09.05 15:30:01</text><text transform="translate(314.40,382.87) scale(0.7998,1)" font-size="10" fill="#1a1a1a" text-anchor="end">sell</text><text transform="translate(368.20,382.87) scale(0.7783,1)" font-size="10" fill="#1a1a1a" text-anchor="end">0.05</text><text transform="translate(436.80,382.87) scale(0.86,1)" font-size="10" fill="#1a1a1a" text-anchor="end">audcad</text><text transform="translate(513.20,382.87) scale(0.7783,1)" font-size="10" fill="#1a1a1a" text-anchor="end">0.90285</text><text transform="translate(589.80,382.87) scale(0.7783,1)" font-size="10" fill="#1a1a1a" text-anchor="end">0.00000</text><text transform="translate(666.20,382.87) scale(0.7783,1)" font-size="10" fill="#1a1a1a" text-anchor="end">0.00000</text><text transform="translate(742.50,382.87) scale(0.7783,1)" font-size="10" fill="#1a1a1a" text-anchor="end">0.92120</text><text transform="translate(818.80,382.87) scale(0.7783,1)" font-size="10" fill="#1a1a1a" text-anchor="end">0</text><text transform="translate(895.20,382.87) scale(0.7783,1)" font-size="10" fill="#1a1a1a" text-anchor="end">-254</text><text transform="translate(1001.60,382.87) scale(0.7783,1)" font-size="10" fill="#1a1a1a" text-anchor="end">-9 790</text><path d="M1008.6999999999999,376.96999999999997 L1013.9,382.17 M1013.9,376.96999999999997 L1008.6999999999999,382.17" stroke="#9a9a9a" stroke-width="1.1"/><path d="M13.3,375.06999999999994 h5.3 l2.6,2.6 v6.6 h-7.9 z" fill="#f4f4f4" stroke="#7a7a7a" stroke-width="0.9"/><path d="M18.6,375.06999999999994 v2.6 h2.6" fill="#9a9a9a" stroke="#7a7a7a" stroke-width="0.6"/><circle cx="20.200000000000003" cy="383.06999999999994" r="2.6" fill="#e0401c"/><rect x="26" y="375.47" width="36.5" height="7" fill="#ffffff" rx="1"/><text transform="translate(246.40,397.14) scale(0.7783,1)" font-size="10" fill="#1a1a1a" text-anchor="end">2025.09.05 15:49:37</text><text transform="translate(314.40,397.14) scale(0.7998,1)" font-size="10" fill="#1a1a1a" text-anchor="end">sell</text><text transform="translate(368.20,397.14) scale(0.7783,1)" font-size="10" fill="#1a1a1a" text-anchor="end">0.09</text><text transform="translate(436.80,397.14) scale(0.86,1)" font-size="10" fill="#1a1a1a" text-anchor="end">audcad</text><text transform="translate(513.20,397.14) scale(0.7783,1)" font-size="10" fill="#1a1a1a" text-anchor="end">0.90649</text><text transform="translate(589.80,397.14) scale(0.7783,1)" font-size="10" fill="#1a1a1a" text-anchor="end">0.00000</text><text transform="translate(666.20,397.14) scale(0.7783,1)" font-size="10" fill="#1a1a1a" text-anchor="end">0.00000</text><text transform="translate(742.50,397.14) scale(0.7783,1)" font-size="10" fill="#1a1a1a" text-anchor="end">0.92120</text><text transform="translate(818.80,397.14) scale(0.7783,1)" font-size="10" fill="#1a1a1a" text-anchor="end">0</text><text transform="translate(895.20,397.14) scale(0.7783,1)" font-size="10" fill="#1a1a1a" text-anchor="end">-459</text><text transform="translate(1001.60,397.14) scale(0.7783,1)" font-size="10" fill="#1a1a1a" text-anchor="end">-14 127</text><path d="M1008.6999999999999,391.24 L1013.9,396.44000000000005 M1013.9,391.24 L1008.6999999999999,396.44000000000005" stroke="#9a9a9a" stroke-width="1.1"/><path d="M13.3,389.34 h5.3 l2.6,2.6 v6.6 h-7.9 z" fill="#f4f4f4" stroke="#7a7a7a" stroke-width="0.9"/><path d="M18.6,389.34 v2.6 h2.6" fill="#9a9a9a" stroke="#7a7a7a" stroke-width="0.6"/><circle cx="20.200000000000003" cy="397.34" r="2.6" fill="#e0401c"/><text transform="translate(246.40,411.41) scale(0.7783,1)" font-size="10" fill="#1a1a1a" text-anchor="end">2025.09.08 16:40:21</text><text transform="translate(314.40,411.41) scale(0.7998,1)" font-size="10" fill="#1a1a1a" text-anchor="end">sell</text><text transform="translate(368.20,411.41) scale(0.7783,1)" font-size="10" fill="#1a1a1a" text-anchor="end">0.15</text><text transform="translate(436.80,411.41) scale(0.86,1)" font-size="10" fill="#1a1a1a" text-anchor="end">audcad</text><text transform="translate(513.20,411.41) scale(0.7783,1)" font-size="10" fill="#1a1a1a" text-anchor="end">0.91012</text><text transform="translate(589.80,411.41) scale(0.7783,1)" font-size="10" fill="#1a1a1a" text-anchor="end">0.00000</text><text transform="translate(666.20,411.41) scale(0.7783,1)" font-size="10" fill="#1a1a1a" text-anchor="end">0.00000</text><text transform="translate(742.50,411.41) scale(0.7783,1)" font-size="10" fill="#1a1a1a" text-anchor="end">0.92120</text><text transform="translate(818.80,411.41) scale(0.7783,1)" font-size="10" fill="#1a1a1a" text-anchor="end">0</text><text transform="translate(895.20,411.41) scale(0.7783,1)" font-size="10" fill="#1a1a1a" text-anchor="end">-659</text><text transform="translate(1001.60,411.41) scale(0.7783,1)" font-size="10" fill="#1a1a1a" text-anchor="end">-17 735</text><path d="M1008.6999999999999,405.51 L1013.9,410.71000000000004 M1013.9,405.51 L1008.6999999999999,410.71000000000004" stroke="#9a9a9a" stroke-width="1.1"/><path d="M13.3,403.60999999999996 h5.3 l2.6,2.6 v6.6 h-7.9 z" fill="#f4f4f4" stroke="#7a7a7a" stroke-width="0.9"/><path d="M18.6,403.60999999999996 v2.6 h2.6" fill="#9a9a9a" stroke="#7a7a7a" stroke-width="0.6"/><circle cx="20.200000000000003" cy="411.60999999999996" r="2.6" fill="#e0401c"/><rect x="26" y="404.01" width="36.5" height="7" fill="#ffffff" rx="1"/><text transform="translate(246.40,425.68) scale(0.7783,1)" font-size="10" fill="#1a1a1a" text-anchor="end">2025.09.10 05:25:03</text><text transform="translate(314.40,425.68) scale(0.7998,1)" font-size="10" fill="#1a1a1a" text-anchor="end">sell</text><text transform="translate(368.20,425.68) scale(0.7783,1)" font-size="10" fill="#1a1a1a" text-anchor="end">0.27</text><text transform="translate(436.80,425.68) scale(0.86,1)" font-size="10" fill="#1a1a1a" text-anchor="end">audcad</text><text transform="translate(513.20,425.68) scale(0.7783,1)" font-size="10" fill="#1a1a1a" text-anchor="end">0.91370</text><text transform="translate(589.80,425.68) scale(0.7783,1)" font-size="10" fill="#1a1a1a" text-anchor="end">0.00000</text><text transform="translate(666.20,425.68) scale(0.7783,1)" font-size="10" fill="#1a1a1a" text-anchor="end">0.00000</text><text transform="translate(742.50,425.68) scale(0.7783,1)" font-size="10" fill="#1a1a1a" text-anchor="end">0.92120</text><text transform="translate(818.80,425.68) scale(0.7783,1)" font-size="10" fill="#1a1a1a" text-anchor="end">0</text><text transform="translate(895.20,425.68) scale(0.7783,1)" font-size="10" fill="#1a1a1a" text-anchor="end">-848</text><text transform="translate(1001.60,425.68) scale(0.7783,1)" font-size="10" fill="#1a1a1a" text-anchor="end">-21 607</text><path d="M1008.6999999999999,419.78 L1013.9,424.98 M1013.9,419.78 L1008.6999999999999,424.98" stroke="#9a9a9a" stroke-width="1.1"/><path d="M13.3,417.87999999999994 h5.3 l2.6,2.6 v6.6 h-7.9 z" fill="#f4f4f4" stroke="#7a7a7a" stroke-width="0.9"/><path d="M18.6,417.87999999999994 v2.6 h2.6" fill="#9a9a9a" stroke="#7a7a7a" stroke-width="0.6"/><circle cx="20.200000000000003" cy="425.87999999999994" r="2.6" fill="#e0401c"/><text transform="translate(246.40,439.95) scale(0.7783,1)" font-size="10" fill="#1a1a1a" text-anchor="end">2025.09.10 17:04:33</text><text transform="translate(314.40,439.95) scale(0.7998,1)" font-size="10" fill="#1a1a1a" text-anchor="end">sell</text><text transform="translate(368.20,439.95) scale(0.7783,1)" font-size="10" fill="#1a1a1a" text-anchor="end">0.47</text><text transform="translate(436.80,439.95) scale(0.86,1)" font-size="10" fill="#1a1a1a" text-anchor="end">audcad</text><text transform="translate(513.20,439.95) scale(0.7783,1)" font-size="10" fill="#1a1a1a" text-anchor="end">0.91732</text><text transform="translate(589.80,439.95) scale(0.7783,1)" font-size="10" fill="#1a1a1a" text-anchor="end">0.00000</text><text transform="translate(666.20,439.95) scale(0.7783,1)" font-size="10" fill="#1a1a1a" text-anchor="end">0.00000</text><text transform="translate(742.50,439.95) scale(0.7783,1)" font-size="10" fill="#1a1a1a" text-anchor="end">0.92120</text><text transform="translate(818.80,439.95) scale(0.7783,1)" font-size="10" fill="#1a1a1a" text-anchor="end">0</text><text transform="translate(895.20,439.95) scale(0.7783,1)" font-size="10" fill="#1a1a1a" text-anchor="end">-1 476</text><text transform="translate(1001.60,439.95) scale(0.7783,1)" font-size="10" fill="#1a1a1a" text-anchor="end">-19 458</text><path d="M1008.6999999999999,434.05 L1013.9,439.25000000000006 M1013.9,434.05 L1008.6999999999999,439.25000000000006" stroke="#9a9a9a" stroke-width="1.1"/><path d="M13.3,432.15 h5.3 l2.6,2.6 v6.6 h-7.9 z" fill="#f4f4f4" stroke="#7a7a7a" stroke-width="0.9"/><path d="M18.6,432.15 v2.6 h2.6" fill="#9a9a9a" stroke="#7a7a7a" stroke-width="0.6"/><circle cx="20.200000000000003" cy="440.15" r="2.6" fill="#e0401c"/><rect x="26" y="432.55" width="36.5" height="7" fill="#ffffff" rx="1"/><text transform="translate(246.40,454.22) scale(0.7783,1)" font-size="10" fill="#1a1a1a" text-anchor="end">2025.09.11 19:20:00</text><text transform="translate(314.40,454.22) scale(0.7998,1)" font-size="10" fill="#1a1a1a" text-anchor="end">sell</text><text transform="translate(368.20,454.22) scale(0.7783,1)" font-size="10" fill="#1a1a1a" text-anchor="end">0.83</text><text transform="translate(436.80,454.22) scale(0.86,1)" font-size="10" fill="#1a1a1a" text-anchor="end">audcad</text><text transform="translate(513.20,454.22) scale(0.7783,1)" font-size="10" fill="#1a1a1a" text-anchor="end">0.92124</text><text transform="translate(589.80,454.22) scale(0.7783,1)" font-size="10" fill="#1a1a1a" text-anchor="end">0.00000</text><text transform="translate(666.20,454.22) scale(0.7783,1)" font-size="10" fill="#1a1a1a" text-anchor="end">0.00000</text><text transform="translate(742.50,454.22) scale(0.7783,1)" font-size="10" fill="#1a1a1a" text-anchor="end">0.92120</text><text transform="translate(818.80,454.22) scale(0.7783,1)" font-size="10" fill="#1a1a1a" text-anchor="end">0</text><text transform="translate(895.20,454.22) scale(0.7783,1)" font-size="10" fill="#1a1a1a" text-anchor="end">-1 043</text><text transform="translate(1001.60,454.22) scale(0.7783,1)" font-size="10" fill="#1a1a1a" text-anchor="end">354</text><path d="M1008.6999999999999,448.32 L1013.9,453.52000000000004 M1013.9,448.32 L1008.6999999999999,453.52000000000004" stroke="#9a9a9a" stroke-width="1.1"/><path d="M13.3,446.41999999999996 h5.3 l2.6,2.6 v6.6 h-7.9 z" fill="#f4f4f4" stroke="#7a7a7a" stroke-width="0.9"/><path d="M18.6,446.41999999999996 v2.6 h2.6" fill="#9a9a9a" stroke="#7a7a7a" stroke-width="0.6"/><circle cx="20.200000000000003" cy="454.41999999999996" r="2.6" fill="#e0401c"/><text transform="translate(246.40,468.49) scale(0.7783,1)" font-size="10" fill="#1a1a1a" text-anchor="end">2025.09.12 04:05:00</text><text transform="translate(314.40,468.49) scale(0.7998,1)" font-size="10" fill="#1a1a1a" text-anchor="end">buy</text><text transform="translate(368.20,468.49) scale(0.7783,1)" font-size="10" fill="#1a1a1a" text-anchor="end">0.03</text><text transform="translate(436.80,468.49) scale(0.86,1)" font-size="10" fill="#1a1a1a" text-anchor="end">audcad</text><text transform="translate(513.20,468.49) scale(0.7783,1)" font-size="10" fill="#1a1a1a" text-anchor="end">0.92266</text><text transform="translate(589.80,468.49) scale(0.7783,1)" font-size="10" fill="#1a1a1a" text-anchor="end">0.00000</text><text transform="translate(666.20,468.49) scale(0.7783,1)" font-size="10" fill="#1a1a1a" text-anchor="end">0.00000</text><text transform="translate(742.50,468.49) scale(0.7783,1)" font-size="10" fill="#1a1a1a" text-anchor="end">0.91910</text><text transform="translate(818.80,468.49) scale(0.7783,1)" font-size="10" fill="#1a1a1a" text-anchor="end">0</text><text transform="translate(895.20,468.49) scale(0.7783,1)" font-size="10" fill="#1a1a1a" text-anchor="end">-5</text><text transform="translate(1001.60,468.49) scale(0.7783,1)" font-size="10" fill="#1a1a1a" text-anchor="end">-1 139</text><path d="M1008.6999999999999,462.59 L1013.9,467.79 M1013.9,462.59 L1008.6999999999999,467.79" stroke="#9a9a9a" stroke-width="1.1"/><path d="M13.3,460.68999999999994 h5.3 l2.6,2.6 v6.6 h-7.9 z" fill="#f4f4f4" stroke="#7a7a7a" stroke-width="0.9"/><path d="M18.6,460.68999999999994 v2.6 h2.6" fill="#9a9a9a" stroke="#7a7a7a" stroke-width="0.6"/><circle cx="20.200000000000003" cy="468.68999999999994" r="2.6" fill="#2f8fe0"/><rect x="26" y="461.09" width="36.5" height="7" fill="#ffffff" rx="1"/><text transform="translate(246.40,482.76) scale(0.7783,1)" font-size="10" fill="#1a1a1a" text-anchor="end">2025.09.12 15:40:47</text><text transform="translate(314.40,482.76) scale(0.7998,1)" font-size="10" fill="#1a1a1a" text-anchor="end">buy</text><text transform="translate(368.20,482.76) scale(0.7783,1)" font-size="10" fill="#1a1a1a" text-anchor="end">0.05</text><text transform="translate(436.80,482.76) scale(0.86,1)" font-size="10" fill="#1a1a1a" text-anchor="end">audcad</text><text transform="translate(513.20,482.76) scale(0.7783,1)" font-size="10" fill="#1a1a1a" text-anchor="end">0.91903</text><text transform="translate(589.80,482.76) scale(0.7783,1)" font-size="10" fill="#1a1a1a" text-anchor="end">0.00000</text><text transform="translate(666.20,482.76) scale(0.7783,1)" font-size="10" fill="#1a1a1a" text-anchor="end">0.00000</text><text transform="translate(742.50,482.76) scale(0.7783,1)" font-size="10" fill="#1a1a1a" text-anchor="end">0.91910</text><text transform="translate(818.80,482.76) scale(0.7783,1)" font-size="10" fill="#1a1a1a" text-anchor="end">0</text><text transform="translate(895.20,482.76) scale(0.7783,1)" font-size="10" fill="#1a1a1a" text-anchor="end">-9</text><text transform="translate(1001.60,482.76) scale(0.7783,1)" font-size="10" fill="#1a1a1a" text-anchor="end">38</text><path d="M1008.6999999999999,476.85999999999996 L1013.9,482.06 M1013.9,476.85999999999996 L1008.6999999999999,482.06" stroke="#9a9a9a" stroke-width="1.1"/><path d="M13.3,474.9599999999999 h5.3 l2.6,2.6 v6.6 h-7.9 z" fill="#f4f4f4" stroke="#7a7a7a" stroke-width="0.9"/><path d="M18.6,474.9599999999999 v2.6 h2.6" fill="#9a9a9a" stroke="#7a7a7a" stroke-width="0.6"/><circle cx="20.200000000000003" cy="482.9599999999999" r="2.6" fill="#2f8fe0"/><rect x="10.4" y="486.4" width="1008.4" height="13.6" fill="#c9c9c9"/><line x1="10.4" y1="499.8" x2="1018.8" y2="499.8" stroke="#555" stroke-width="1.2"/><rect x="13.3" y="488.2" width="8.4" height="9.6" fill="#f4f4f4" stroke="#9a9a9a" stroke-width="0.8"/><path d="M17.5,489.8 l2.6,3.3 l-2.6,3.3 l-2.6,-3.3 z" fill="#e0401c"/><text x="26.90" y="496.00" font-size="8.4" fill="#111" text-anchor="start" textLength="74.1" lengthAdjust="spacingAndGlyphs" font-weight="bold">残高: 1 025 492 JPY</text><text x="106.30" y="496.00" font-size="8.4" fill="#111" text-anchor="start" textLength="78" lengthAdjust="spacingAndGlyphs" font-weight="bold">有効証拠金: 930 279</text><text x="188.60" y="496.00" font-size="8.4" fill="#111" text-anchor="start" textLength="72.4" lengthAdjust="spacingAndGlyphs" font-weight="bold">必要証拠金: 17 677</text><text x="264.10" y="496.00" font-size="8.4" fill="#111" text-anchor="start" textLength="77.4" lengthAdjust="spacingAndGlyphs" font-weight="bold">余剰証拠金: 912 602</text><text x="347.00" y="496.00" font-size="8.4" fill="#111" text-anchor="start" textLength="93.5" lengthAdjust="spacingAndGlyphs" font-weight="bold">証拠金維持率: 5262.65%</text><text x="1001.60" y="496.00" font-size="8.4" fill="#111" text-anchor="end" textLength="28.6" lengthAdjust="spacingAndGlyphs" font-weight="bold">-95 213</text><path d="M11.8,500.5 V515.2 H44 V500.5" fill="#fff" stroke="#3a3a3a" stroke-width="0.9"/><text x="20.40" y="510.00" font-size="8.3" fill="#111" text-anchor="start" textLength="15" lengthAdjust="spacingAndGlyphs" stroke="#111" stroke-width="0.25">取引</text><text x="51.10" y="510.00" font-size="8.3" fill="#5c5c5c" text-anchor="start" textLength="33.1" lengthAdjust="spacingAndGlyphs" stroke="#5c5c5c" stroke-width="0.12">運用比率</text><text x="99.90" y="510.00" font-size="8.3" fill="#5c5c5c" text-anchor="start" textLength="33.3" lengthAdjust="spacingAndGlyphs" stroke="#5c5c5c" stroke-width="0.12">口座履歴</text><text x="148.20" y="510.00" font-size="8.3" fill="#5c5c5c" text-anchor="start" textLength="23.7" lengthAdjust="spacingAndGlyphs" stroke="#5c5c5c" stroke-width="0.12">ニュース</text><text x="186.90" y="510.00" font-size="8.3" fill="#5c5c5c" text-anchor="start" textLength="41.6" lengthAdjust="spacingAndGlyphs" stroke="#5c5c5c" stroke-width="0.12">アラーム設定</text><text x="242.80" y="510.00" font-size="8.3" fill="#5c5c5c" text-anchor="start" textLength="44.2" lengthAdjust="spacingAndGlyphs" stroke="#5c5c5c" stroke-width="0.12">メールボックス</text><text x="305.00" y="510.00" font-size="8.3" fill="#5c5c5c" text-anchor="start" textLength="30.2" lengthAdjust="spacingAndGlyphs" stroke="#5c5c5c" stroke-width="0.12">マーケット</text><text x="361.70" y="510.00" font-size="8.3" fill="#5c5c5c" text-anchor="start" textLength="15.9" lengthAdjust="spacingAndGlyphs" stroke="#5c5c5c" stroke-width="0.12">記事</text><text x="398.00" y="510.00" font-size="8.3" fill="#5c5c5c" text-anchor="start" textLength="30.2" lengthAdjust="spacingAndGlyphs" stroke="#5c5c5c" stroke-width="0.12">ライブラリ</text><text x="441.80" y="510.00" font-size="8.3" fill="#5c5c5c" text-anchor="start" textLength="38.3" lengthAdjust="spacingAndGlyphs" stroke="#5c5c5c" stroke-width="0.12">エキスパート</text><text x="495.20" y="510.00" font-size="8.3" fill="#5c5c5c" text-anchor="start" textLength="32.8" lengthAdjust="spacingAndGlyphs" stroke="#5c5c5c" stroke-width="0.12">操作履歴</text><line x1="92.4" y1="504" x2="92.4" y2="513" stroke="#9a9a9a" stroke-width="0.9"/><line x1="141.1" y1="504" x2="141.1" y2="513" stroke="#9a9a9a" stroke-width="0.9"/><line x1="179.4" y1="504" x2="179.4" y2="513" stroke="#9a9a9a" stroke-width="0.9"/><line x1="235.1" y1="504" x2="235.1" y2="513" stroke="#9a9a9a" stroke-width="0.9"/><line x1="298.3" y1="504" x2="298.3" y2="513" stroke="#9a9a9a" stroke-width="0.9"/><line x1="354.3" y1="504" x2="354.3" y2="513" stroke="#9a9a9a" stroke-width="0.9"/><line x1="391.3" y1="504" x2="391.3" y2="513" stroke="#9a9a9a" stroke-width="0.9"/><line x1="435" y1="504" x2="435" y2="513" stroke="#9a9a9a" stroke-width="0.9"/><line x1="487.5" y1="504" x2="487.5" y2="513" stroke="#9a9a9a" stroke-width="0.9"/><line x1="536" y1="504" x2="536" y2="513" stroke="#9a9a9a" stroke-width="0.9"/><text x="287.30" y="513.60" font-size="6.2" fill="#e02020" text-anchor="start" font-weight="bold">6</text><text x="336.60" y="514.40" font-size="6.2" fill="#e02020" text-anchor="start" textLength="10.4" lengthAdjust="spacingAndGlyphs" font-weight="bold">105</text><text x="379.50" y="513.80" font-size="6.2" fill="#e02020" text-anchor="start" font-weight="bold">9</text><rect x="0" y="340" width="10.2" height="178" fill="#f0f0f0"/><rect x="0" y="350" width="10.2" height="167" fill="#cddbea"/><path d="M2.8,341.6 l3.8,3.8 M6.6,341.6 l-3.8,3.8" stroke="#111" stroke-width="1.1"/><text transform="translate(8.6,514) rotate(-90)" font-size="8" fill="#333" textLength="33" lengthAdjust="spacingAndGlyphs">ターミナル</text><text x="1.00" y="530.60" font-size="8.3" fill="#111" text-anchor="start" textLength="99.3" lengthAdjust="spacingAndGlyphs" stroke="#111" stroke-width="0.2">F1キーでヘルプが表示されます</text><line x1="514.3" y1="521.6" x2="514.3" y2="534.6" stroke="#c6c6c6" stroke-width="1"/><line x1="596.8" y1="521.6" x2="596.8" y2="534.6" stroke="#c6c6c6" stroke-width="1"/><line x1="669.3" y1="521.6" x2="669.3" y2="534.6" stroke="#c6c6c6" stroke-width="1"/><line x1="720.6" y1="521.6" x2="720.6" y2="534.6" stroke="#c6c6c6" stroke-width="1"/><line x1="771" y1="521.6" x2="771" y2="534.6" stroke="#c6c6c6" stroke-width="1"/><line x1="821" y1="521.6" x2="821" y2="534.6" stroke="#c6c6c6" stroke-width="1"/><line x1="871" y1="521.6" x2="871" y2="534.6" stroke="#c6c6c6" stroke-width="1"/><line x1="916.5" y1="521.6" x2="916.5" y2="534.6" stroke="#c6c6c6" stroke-width="1"/><text x="519.20" y="530.60" font-size="9.2" fill="#111" text-anchor="start" textLength="27.3" lengthAdjust="spacingAndGlyphs">Default</text><text x="601.20" y="530.60" font-size="9.2" fill="#111" text-anchor="start" textLength="59.9" lengthAdjust="spacingAndGlyphs">2025.09.12 20:00</text><text x="673.70" y="530.60" font-size="9.2" fill="#111" text-anchor="start" textLength="39.3" lengthAdjust="spacingAndGlyphs">O: 0.91973</text><text x="724.40" y="530.60" font-size="9.2" fill="#111" text-anchor="start" textLength="39.4" lengthAdjust="spacingAndGlyphs">H: 0.92003</text><text x="775.00" y="530.60" font-size="9.2" fill="#111" text-anchor="start" textLength="37" lengthAdjust="spacingAndGlyphs">L: 0.91973</text><text x="824.20" y="530.60" font-size="9.2" fill="#111" text-anchor="start" textLength="37.5" lengthAdjust="spacingAndGlyphs">C: 0.91989</text><text x="873.50" y="530.60" font-size="9.2" fill="#111" text-anchor="start" textLength="22.3" lengthAdjust="spacingAndGlyphs">V: 235</text><text x="940.40" y="530.60" font-size="9.2" fill="#111" text-anchor="start" textLength="39.5" lengthAdjust="spacingAndGlyphs">7438/30 kb</text><rect x="920.50" y="524.5" width="1.4" height="8.5" fill="#5a9a2a"/><rect x="922.55" y="524.5" width="1.4" height="8.5" fill="#5a9a2a"/><rect x="924.60" y="524.5" width="1.4" height="8.5" fill="#5a9a2a"/><rect x="926.65" y="524.5" width="1.4" height="8.5" fill="#5a9a2a"/><rect x="928.70" y="524.5" width="1.4" height="8.5" fill="#5a9a2a"/><rect x="930.75" y="524.5" width="1.4" height="8.5" fill="#3a6aa0"/><rect x="932.80" y="524.5" width="1.4" height="8.5" fill="#3a6aa0"/><rect x="934.85" y="524.5" width="1.4" height="8.5" fill="#3a6aa0"/><path d="M1011,533 L1020,524 M1014,533 L1020,527 M1017,533 L1020,530" stroke="#a0a0a0" stroke-width="0.8"/><rect x="5" y="6" width="11.2" height="12" fill="#050505"/><text x="7.2" y="12.4" font-size="4.6" font-weight="bold" font-style="italic" fill="#e8e8e8">XM</text><path d="M7.3,13.4 h7" stroke="#777" stroke-width="0.8"/><path d="M6.4,11.6 l1.6,-1.2" stroke="#e03020" stroke-width="0.9"/><text x="59.00" y="15.90" font-size="9.2" fill="#1a1a1a" text-anchor="start" textLength="257.6" lengthAdjust="spacingAndGlyphs">: XMTradingMU-Demo 6 - デモ口座 - FinTrade Limited - [AUDCAD,M5]</text><path d="M937,12.4 h7.2" stroke="#111" stroke-width="0.9"/><rect x="969.4" y="8.7" width="6.6" height="6.8" fill="none" stroke="#111" stroke-width="0.9"/><path d="M1001.6,8.6 l7.2,7.2 M1008.8,8.6 l-7.2,7.2" stroke="#111" stroke-width="0.9"/><text x="19.50" y="33.50" font-size="9.2" fill="#1a1a1a" text-anchor="start" textLength="36.2" lengthAdjust="spacingAndGlyphs" stroke="#1a1a1a" stroke-width="0.2">ファイル (F)</text><text x="69.10" y="33.50" font-size="9.2" fill="#1a1a1a" text-anchor="start" textLength="29.6" lengthAdjust="spacingAndGlyphs" stroke="#1a1a1a" stroke-width="0.2">表示 (V)</text><text x="111.50" y="33.50" font-size="9.2" fill="#1a1a1a" text-anchor="start" textLength="24.6" lengthAdjust="spacingAndGlyphs" stroke="#1a1a1a" stroke-width="0.2">挿入(I)</text><text x="149.00" y="33.50" font-size="9.2" fill="#1a1a1a" text-anchor="start" textLength="36.4" lengthAdjust="spacingAndGlyphs" stroke="#1a1a1a" stroke-width="0.2">チャート (C)</text><text x="199.00" y="33.50" font-size="9.2" fill="#1a1a1a" text-anchor="start" textLength="30.7" lengthAdjust="spacingAndGlyphs" stroke="#1a1a1a" stroke-width="0.2">ツール (T)</text><text x="242.80" y="33.50" font-size="9.2" fill="#1a1a1a" text-anchor="start" textLength="45.1" lengthAdjust="spacingAndGlyphs" stroke="#1a1a1a" stroke-width="0.2">ウィンドウ (W)</text><text x="301.60" y="33.50" font-size="9.2" fill="#1a1a1a" text-anchor="start" textLength="36.6" lengthAdjust="spacingAndGlyphs" stroke="#1a1a1a" stroke-width="0.2">ヘルプ (H)</text><rect x="3.4" y="25.6" width="6" height="5" fill="#dce8f5" stroke="#6a9ad0" stroke-width="0.8"/><rect x="5.8" y="29" width="6.4" height="5.4" fill="#e8f0fa" stroke="#6a9ad0" stroke-width="0.8"/><rect x="981.7" y="24.8" width="11.4" height="11.5" fill="#fff"/><rect x="995.5" y="24.8" width="11.4" height="11.5" fill="#fff"/><rect x="1009" y="24.8" width="11.4" height="11.5" fill="#fff"/><path d="M985.5,32.2 h4" stroke="#2a4a6a" stroke-width="1.1"/><rect x="998.5" y="29" width="4.2" height="3.6" fill="none" stroke="#2a4a6a" stroke-width="0.8"/><path d="M999.8,29 v-1.3 h4.2 v3.6 h-1.3" fill="none" stroke="#2a4a6a" stroke-width="0.8"/><path d="M1012.6,28.6 l4.4,4.4 M1017,28.6 l-4.4,4.4" stroke="#2a4a6a" stroke-width="1"/><rect x="0" y="37.9" width="1022" height="0.9" fill="#c8c8c8"/><rect x="0" y="56.8" width="599.5" height="0.9" fill="#d0d0d0"/><rect x="599.2" y="38.6" width="0.9" height="19" fill="#d8d8d8"/><rect x="0" y="75.8" width="401.5" height="0.8" fill="#d0d0d0"/><rect x="401" y="57.6" width="0.9" height="19" fill="#c8c8c8"/><rect x="1" y="41.30" width="1.6" height="1.1" fill="#b4b4b4"/><rect x="1" y="43.50" width="1.6" height="1.1" fill="#b4b4b4"/><rect x="1" y="45.70" width="1.6" height="1.1" fill="#b4b4b4"/><rect x="1" y="47.90" width="1.6" height="1.1" fill="#b4b4b4"/><rect x="1" y="50.10" width="1.6" height="1.1" fill="#b4b4b4"/><rect x="1" y="52.30" width="1.6" height="1.1" fill="#b4b4b4"/><rect x="1" y="54.50" width="1.6" height="1.1" fill="#b4b4b4"/><rect x="1" y="60.50" width="1.6" height="1.1" fill="#b4b4b4"/><rect x="1" y="62.70" width="1.6" height="1.1" fill="#b4b4b4"/><rect x="1" y="64.90" width="1.6" height="1.1" fill="#b4b4b4"/><rect x="1" y="67.10" width="1.6" height="1.1" fill="#b4b4b4"/><rect x="1" y="69.30" width="1.6" height="1.1" fill="#b4b4b4"/><rect x="1" y="71.50" width="1.6" height="1.1" fill="#b4b4b4"/><rect x="1" y="73.70" width="1.6" height="1.1" fill="#b4b4b4"/><rect x="218" y="60.50" width="1.6" height="1.1" fill="#b4b4b4"/><rect x="218" y="62.70" width="1.6" height="1.1" fill="#b4b4b4"/><rect x="218" y="64.90" width="1.6" height="1.1" fill="#b4b4b4"/><rect x="218" y="67.10" width="1.6" height="1.1" fill="#b4b4b4"/><rect x="218" y="69.30" width="1.6" height="1.1" fill="#b4b4b4"/><rect x="218" y="71.50" width="1.6" height="1.1" fill="#b4b4b4"/><rect x="218" y="73.70" width="1.6" height="1.1" fill="#b4b4b4"/><rect x="343" y="41.30" width="1.6" height="1.1" fill="#b4b4b4"/><rect x="343" y="43.50" width="1.6" height="1.1" fill="#b4b4b4"/><rect x="343" y="45.70" width="1.6" height="1.1" fill="#b4b4b4"/><rect x="343" y="47.90" width="1.6" height="1.1" fill="#b4b4b4"/><rect x="343" y="50.10" width="1.6" height="1.1" fill="#b4b4b4"/><rect x="343" y="52.30" width="1.6" height="1.1" fill="#b4b4b4"/><rect x="343" y="54.50" width="1.6" height="1.1" fill="#b4b4b4"/><rect x="7.2" y="43.2" width="8.8" height="7.2" fill="#eaf2fb" stroke="#5a8fd0" stroke-width="0.9"/><path d="M12.3,48.8 h6.8 M15.7,45.2 v8.2" stroke="#22b822" stroke-width="2.6"/><path d="M22.8,48 h3.6 l-1.8,1.9 z" fill="#111"/><rect x="33.6" y="43.2" width="8.4" height="6.6" fill="#eaf2fb" stroke="#5a8fd0" stroke-width="0.9"/><rect x="36.8" y="47.4" width="8.6" height="6.8" fill="#eaf2fb" stroke="#5a8fd0" stroke-width="0.9"/><path d="M49.2,48 h3.6 l-1.8,1.9 z" fill="#111"/><rect x="58.8" y="41.3" width="1" height="13.700000000000003" fill="#c4c4c4"/><rect x="65.3" y="43.3" width="10.8" height="10.6" fill="#fff" stroke="#5a9ae0" stroke-width="1"/><path d="M68.6,45.4 l2,2 -2,2 -2,-2 z" fill="#1a9a2a"/><path d="M72.6,48.6 l2,2 -2,2 -2,-2 z" fill="#e04a3a"/><path d="M91.2,43.6 l5.2,5.2 -5.2,5.2 -5.2,-5.2 z" fill="none" stroke="#555" stroke-width="1.1"/><path d="M91.2,43.6 v10.4 M86,48.8 h10.4" stroke="#777" stroke-width="0.7"/><path d="M104,45 h4 l1,1.2 h4.5 v6 h-9.5 z" fill="#f2dc8a" stroke="#c9a040" stroke-width="0.7"/><path d="M112.6,46.8 l1.2,2.6 2.8,0.3 -2.1,1.9 0.6,2.8 -2.5,-1.4 -2.5,1.4 0.6,-2.8 -2.1,-1.9 2.8,-0.3 z" fill="#f0d040" stroke="#b09020" stroke-width="0.5"/><rect x="122.2" y="40" width="18.39999999999999" height="16.200000000000003" fill="#f4f9f4"/><path d="M122.60000000000001,56.2 V40.4 H140.6" fill="none" stroke="#a0a0a0" stroke-width="0.8"/><rect x="125" y="43.2" width="11.6" height="10.2" fill="#e8eef8" stroke="#4a8ad8" stroke-width="1.1"/><rect x="125.5" y="43.7" width="2.6" height="9.2" fill="#5a9ae0"/><rect x="128.5" y="50" width="7.6" height="3" fill="#fff"/><rect x="145.2" y="43.4" width="9" height="9" fill="#fafafa" stroke="#b0a080" stroke-width="0.7"/><circle cx="151" cy="48.4" r="3.3" fill="#d8e8f8" stroke="#4a8ad8" stroke-width="1"/><path d="M153.4,50.8 l3.6,3.6" stroke="#d0a020" stroke-width="1.6"/><rect x="163.3" y="41.3" width="1" height="13.700000000000003" fill="#c4c4c4"/><path d="M170.4,43.6 h5.6 l2.4,2.4 v6.8 h-8 z" fill="#f8f8f8" stroke="#666" stroke-width="0.8"/><path d="M173.2,51.8 h8.2 M177.3,47.8 v8" stroke="#22b822" stroke-width="2.4"/><text x="184.20" y="50.80" font-size="9.2" fill="#1a1a1a" text-anchor="start" textLength="33.4" lengthAdjust="spacingAndGlyphs" stroke="#1a1a1a" stroke-width="0.25">新規注文</text><path d="M226.8,48.4 l4.4,-4.6 6.8,5.6 -4.6,4.4 z" fill="#ecc95c" stroke="#b0602a" stroke-width="0.8"/><path d="M227.4,49.6 l5.8,4.6 4.6,-4.2" fill="none" stroke="#c03a20" stroke-width="0.9"/><rect x="248" y="42.8" width="7.6" height="8" fill="#4a90e0" stroke="#3a70b0" stroke-width="0.6"/><path d="M249.4,45 h2.2 M249.4,47 h4.6 M249.4,49 h4" stroke="#fff" stroke-width="0.8"/><path d="M246.4,54.6 q-0.5,-3.2 2.8,-3.4 q2,-2.2 4.6,-0.2 q3.8,0 3.8,3.6 z" fill="#eef2f6" stroke="#8aa0b8" stroke-width="0.7"/><circle cx="272" cy="48.7" r="5.6" fill="none" stroke="#b8c4d0" stroke-width="1.2"/><circle cx="272" cy="48.7" r="3.2" fill="none" stroke="#8aa0b8" stroke-width="1"/><circle cx="272" cy="48.7" r="1.2" fill="#3a6aa0"/><path d="M272.6,54 l2.2,-5 2,-1" stroke="#30a030" stroke-width="1.3" fill="none"/><rect x="283.5" y="39.9" width="56.5" height="16.1" fill="#f4f9f4"/><path d="M283.9,56 V40.3 H340" fill="none" stroke="#a0a0a0" stroke-width="0.8"/><path d="M286.2,47 q6,-5 12.3,0 l-1.2,5.5 q-5,2.2 -10,0 z" fill="#e8c860" stroke="#a08030" stroke-width="0.6"/><path d="M286.4,46.4 q6,-4.6 12,0" fill="#6aaae8" stroke="#3a7ac0" stroke-width="0.8"/><circle cx="295.6" cy="51.8" r="3.2" fill="#20a030"/><path d="M294.6,50.2 l2.6,1.6 -2.6,1.6 z" fill="#fff"/><text x="301.50" y="51.10" font-size="9.2" fill="#1a1a1a" text-anchor="start" textLength="33.7" lengthAdjust="spacingAndGlyphs" stroke="#1a1a1a" stroke-width="0.25">自動売買</text><path d="M353,44.6 v9.4 h8.6 M351.6,46 l1.4,-1.6 1.4,1.6 M360.2,52.6 l1.4,1.4 -1.4,1.4" fill="none" stroke="#444" stroke-width="0.9"/><path d="M357.6,51 v-5.4 h2" fill="none" stroke="#20a020" stroke-width="1.2"/><rect x="367.2" y="40" width="17.600000000000023" height="16.200000000000003" fill="#f4f9f4"/><path d="M367.59999999999997,56.2 V40.4 H384.8" fill="none" stroke="#a0a0a0" stroke-width="0.8"/><path d="M373.2,44.6 v9.4 h8.6" fill="none" stroke="#444" stroke-width="0.9"/><rect x="376.2" y="44.8" width="3.2" height="6.2" fill="#22bb22" stroke="#118811" stroke-width="0.6"/><path d="M377.8,43.4 v9" stroke="#118811" stroke-width="0.6"/><path d="M393.4,44.6 v9.4 h8.4" fill="none" stroke="#444" stroke-width="0.9"/><path d="M393.8,51 l3.8,-4.2 4,3" fill="none" stroke="#30a030" stroke-width="0.9"/><rect x="408.2" y="41.3" width="1" height="13.700000000000003" fill="#c4c4c4"/><circle cx="418.6" cy="47.4" r="3.6" fill="#d8e8f8" stroke="#4a8ad8" stroke-width="1.1"/><path d="M421.20000000000005,50 l3.6,3.6" stroke="#d8a020" stroke-width="1.8"/><path d="M416.8,47.4 h3.6" stroke="#3a70c0" stroke-width="0.9"/><path d="M418.6,45.6 v3.6" stroke="#3a70c0" stroke-width="0.9"/><circle cx="438.6" cy="47.4" r="3.6" fill="#d8e8f8" stroke="#4a8ad8" stroke-width="1.1"/><path d="M441.20000000000005,50 l3.6,3.6" stroke="#d8a020" stroke-width="1.8"/><path d="M436.8,47.4 h3.6" stroke="#3a70c0" stroke-width="0.9"/><rect x="454.2" y="43" width="5.4" height="4.8" fill="#3a9a4a"/><rect x="460.4" y="43" width="5.4" height="4.8" fill="#3a80d0"/><rect x="454.2" y="48.6" width="5.4" height="4.8" fill="#3a80d0"/><rect x="460.4" y="48.6" width="5.4" height="4.8" fill="#3a9a4a"/><rect x="472.4" y="41.3" width="1" height="13.700000000000003" fill="#c4c4c4"/><rect x="476" y="40" width="18" height="16.200000000000003" fill="#f4f9f4"/><path d="M476.4,56.2 V40.4 H494" fill="none" stroke="#a0a0a0" stroke-width="0.8"/><path d="M480.6,44 v9.6 h8.6" fill="none" stroke="#444" stroke-width="0.9"/><path d="M483.2,46 l3.6,2.6 -3.6,2.6 z" fill="#22b030"/><path d="M501,44 v9.6 h9.2 M503.6,44.6 v8" fill="none" stroke="#444" stroke-width="0.9"/><path d="M506,47.4 l3,1.6 -3,1.6 z" fill="#e04030"/><rect x="517" y="41.3" width="1" height="13.700000000000003" fill="#c4c4c4"/><path d="M524.6,43.4 h5 l2,2 v6.6 h-7 z" fill="#f6f6f6" stroke="#666" stroke-width="0.8"/><path d="M527.4,51.8 h7.6 M531.2,48 v7.6" stroke="#22b822" stroke-width="2.2"/><path d="M538.6,48 h3.6 l-1.8,1.9 z" fill="#111"/><circle cx="554.8" cy="48.6" r="5.4" fill="#fff" stroke="#2a70c8" stroke-width="1.8"/><path d="M554.8,45.6 v3 h2.2" fill="none" stroke="#1a3a70" stroke-width="0.8"/><path d="M564.6,48 h3.6 l-1.8,1.9 z" fill="#111"/><rect x="575.8" y="43.6" width="11.6" height="9.6" fill="#f4f8fc" stroke="#3a7ac8" stroke-width="1"/><rect x="575.8" y="43.6" width="11.6" height="2.2" fill="#3a7ac8"/><path d="M577,50.5 l3,-1.8 3,1.4 3.5,-2" fill="none" stroke="#e05040" stroke-width="0.7"/><path d="M577,51.8 l3,-1 3,1 3.5,-1.5" fill="none" stroke="#40a040" stroke-width="0.7"/><path d="M591.4,48 h3.6 l-1.8,1.9 z" fill="#111"/><circle cx="989.6" cy="46.6" r="2.6" fill="none" stroke="#2a7ad8" stroke-width="1.3"/><path d="M987.6,48.6 l-3,3" stroke="#2a7ad8" stroke-width="1.6"/><ellipse cx="1005" cy="50.6" rx="4.2" ry="2.8" fill="#e4e4e4" stroke="#c8c8c8" stroke-width="0.5"/><circle cx="1011.4" cy="46.7" r="5.3" fill="#e03a24"/><text x="1011.4" y="49.7" font-size="8" font-weight="bold" fill="#fff" text-anchor="middle">1</text><rect x="4.8" y="59.3" width="18.5" height="15.400000000000006" fill="#f4f9f4"/><path d="M5.2,74.7 V59.699999999999996 H23.3" fill="none" stroke="#a0a0a0" stroke-width="0.8"/><path d="M10.8,62.8 l5.6,5.4 -2.6,0.3 1.9,3.8 -1.4,0.7 -1.8,-3.8 -1.8,1.8 z" fill="#3a3a3a"/><path d="M33.8,62.8 v11 M28.2,68.2 h11.2" stroke="#888" stroke-width="0.9"/><rect x="45.8" y="59.6" width="1" height="15.199999999999996" fill="#c4c4c4"/><path d="M58.2,64 v8.6" stroke="#555" stroke-width="1"/><path d="M74.3,68.6 h8.6" stroke="#555" stroke-width="1"/><path d="M94,72.6 l9.4,-8.4" stroke="#555" stroke-width="0.9"/><path d="M112.6,70.8 l8.6,-8 M113.6,73.4 l8.6,-8 M115.4,69.6 l5,-4.6" stroke="#555" stroke-width="0.9"/><text x="120.6" y="74" font-size="3.6" fill="#333">E</text><path d="M132.8,63 h10.4 M132.8,65.8 h10.4 M132.8,68.6 h10.4 M132.8,71.4 h10.4" stroke="#777" stroke-width="0.7" stroke-dasharray="1.4 0.6"/><text x="141" y="74.4" font-size="3.6" fill="#333">F</text><text x="155.6" y="71.6" font-size="8.6" fill="#333">A</text><rect x="174" y="63.2" width="8.6" height="9" fill="none" stroke="#999" stroke-width="0.6" stroke-dasharray="1 0.8"/><text x="175.4" y="71.6" font-size="8.4" fill="#333" font-weight="bold">T</text><path d="M196,63.4 l1.8,1.8 -1.8,1.8 -1.8,-1.8 z M201.4,68.2 l1.8,1.8 -1.8,1.8 -1.8,-1.8 z" fill="#333"/><path d="M196,65.2 l5.4,4.8" stroke="#555" stroke-width="0.8"/><path d="M207,67.6 h3.6 l-1.8,1.9 z" fill="#111"/><rect x="215.4" y="58.2" width="1" height="17.799999999999997" fill="#c4c4c4"/><rect x="242.4" y="59.4" width="17.599999999999994" height="15.600000000000001" fill="#f4f9f4"/><path d="M242.8,75 V59.8 H260" fill="none" stroke="#a0a0a0" stroke-width="0.8"/><text x="225.90" y="70.70" font-size="7.4" fill="#505050" text-anchor="start" textLength="9.2" lengthAdjust="spacingAndGlyphs">M1</text><text x="245.90" y="70.70" font-size="7.4" fill="#505050" text-anchor="start" textLength="9.7" lengthAdjust="spacingAndGlyphs">M5</text><text x="264.90" y="70.70" font-size="7.4" fill="#505050" text-anchor="start" textLength="12.7" lengthAdjust="spacingAndGlyphs">M15</text><text x="284.90" y="70.70" font-size="7.4" fill="#505050" text-anchor="start" textLength="12.7" lengthAdjust="spacingAndGlyphs">M30</text><text x="306.90" y="70.70" font-size="7.4" fill="#505050" text-anchor="start" textLength="8.3" lengthAdjust="spacingAndGlyphs">H1</text><text x="326.00" y="70.70" font-size="7.4" fill="#505050" text-anchor="start" textLength="9.2" lengthAdjust="spacingAndGlyphs">H4</text><text x="347.00" y="70.70" font-size="7.4" fill="#505050" text-anchor="start" textLength="8.3" lengthAdjust="spacingAndGlyphs">D1</text><text x="366.30" y="70.70" font-size="7.4" fill="#505050" text-anchor="start" textLength="10.6" lengthAdjust="spacingAndGlyphs">W1</text><text x="385.60" y="70.70" font-size="7.4" fill="#505050" text-anchor="start" textLength="10.6" lengthAdjust="spacingAndGlyphs">MN</text>
<rect x="0" y="0" width="1024" height="1.9" fill="#0e1f3c"/>
<rect x="1021.9" y="0" width="2.1" height="537" fill="#0e1f3c"/>
<rect x="0" y="535.2" width="1024" height="1.8" fill="#0e1f3c"/>
</svg>
</body></html>
